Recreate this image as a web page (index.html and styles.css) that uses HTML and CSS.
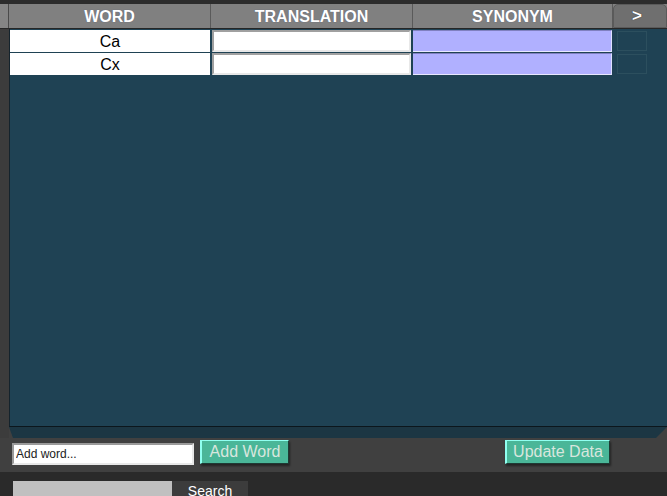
FILE: index.html
```html
<!DOCTYPE html>
<html>
<head>
<meta charset="utf-8">
<link rel="stylesheet" href="styles.css">
</head>
<body>
<div class="app">
  <div class="topstrip"></div>
  <div class="header">
    <div class="hgutter"></div>
    <div class="hcell w-word">WORD</div>
    <div class="hcell w-trans">TRANSLATION</div>
    <div class="hcell w-syn">SYNONYM</div>
    <div class="hnext">&gt;</div>
  </div>
  <div class="body">
    <div class="gutter"></div>
    <div class="tablewrap">
      <div class="table">
        <div class="row">
          <div class="cell-word">Ca</div>
          <div class="cell-trans"><input class="tinput" type="text"></div>
          <div class="cell-syn"></div>
          <div class="cell-box"></div>
        </div>
        <div class="row">
          <div class="cell-word">Cx</div>
          <div class="cell-trans"><input class="tinput" type="text"></div>
          <div class="cell-syn"></div>
          <div class="cell-box"></div>
        </div>
      </div>
      <div class="bevel"></div>
    </div>
  </div>
  <div class="controls">
    <input class="addinput" type="text" placeholder="Add word...">
    <button class="btn btn-add">Add Word</button>
    <button class="btn btn-update">Update Data</button>
  </div>
  <div class="searchbar">
    <div class="searchbox"></div>
    <div class="searchbtn">Search</div>
  </div>
</div>
</body>
</html>
```
FILE: styles.css
```css
* { box-sizing: border-box; }
html, body {
  margin: 0;
  padding: 0;
  background: #404040;
  font-family: "Liberation Sans", Arial, sans-serif;
  overflow: hidden;
}
.app {
  width: 667px;
  height: 496px;
  display: flex;
  flex-direction: column;
}
.app > * { flex-shrink: 0; }
.topstrip {
  height: 4px;
  background: #2c2c2c;
}
.header {
  height: 25px;
  display: flex;
  background: #808080;
  border-bottom: 1px solid #262626;
}
.hgutter {
  width: 9px;
  background: #858585;
  border-right: 1px solid #4a4a4a;
}
.hcell {
  color: #fff;
  font-weight: bold;
  font-size: 16px;
  line-height: 25px;
  text-align: center;
  border-right: 1px solid #5a5a5a;
  text-shadow: 0 0 1px rgba(40, 60, 120, 0.5);
}
.w-word { width: 202px; }
.w-trans { width: 202px; }
.w-syn { width: 200px; }
.hnext {
  flex: 1;
  background: #6f6f6f;
  color: #fff;
  font-weight: bold;
  font-size: 17px;
  line-height: 22px;
  text-align: center;
  border: 1px solid #5a5a5a;
  border-radius: 5px 5px 0 0;
  padding-right: 6px;
  text-shadow: 0 0 1px #222;
}
.body {
  display: flex;
  height: 409px;
}
.gutter {
  width: 9px;
  background: #3c3c3c;
}
.tablewrap {
  flex: 1;
  display: flex;
  flex-direction: column;
}
.table {
  flex: 1;
  background: #1f4254;
  border-left: 1px solid #14232c;
  border-bottom: 1px solid #0c161c;
  padding-top: 1px;
  display: flex;
  flex-direction: column;
  gap: 1px;
}
.row {
  display: flex;
  height: 22px;
}
.cell-word {
  width: 200px;
  background: #fff;
  color: #000;
  font-size: 16px;
  line-height: 23px;
  text-align: center;
}
.cell-trans {
  width: 202px;
  padding-left: 2px;
}
.tinput {
  display: block;
  width: 199px;
  height: 22px;
  margin: 0;
  border: 2px solid;
  border-color: #a0a0a0 #e8e8e8 #e8e8e8 #a0a0a0;
  background: #fff;
  padding: 0;
}
.cell-syn {
  width: 199px;
  margin-left: 1px;
  background: #b0b0ff;
  border-right: 1px solid #e0e0ff;
  border-bottom: 1px solid #e8e8ff;
  border-top: 1px solid #8080c0;
}
.cell-box {
  width: 30px;
  height: 20px;
  margin: 1px 0 0 5px;
  border: 1px solid #2c4f5e;
}
.bevel {
  height: 11px;
  background: #1c3643;
  clip-path: polygon(0 0, 100% 0, calc(100% - 11px) 100%, 4px 100%);
}
.controls {
  height: 34px;
  display: flex;
  align-items: flex-start;
  padding-top: 2px;
}
.addinput {
  margin: 3px 0 0 12px;
  width: 182px;
  height: 22px;
  border: 2px solid;
  border-color: #9a9a9a #e8e8e8 #e8e8e8 #9a9a9a;
  background: #fff;
  font-family: "Liberation Sans", Arial, sans-serif;
  font-size: 12px;
  padding: 0 2px;
}
.addinput::placeholder { color: #222; }
.btn {
  height: 24px;
  background: #4ab698;
  color: #d8e6de;
  font-family: "Liberation Sans", Arial, sans-serif;
  font-size: 16px;
  line-height: 20px;
  padding: 0 6px;
  border: 1px solid;
  border-color: #90fff0 #1e3a34 #1e3a34 #90fff0;
  border-left-width: 2px;
  box-shadow: 1px 2px 2px rgba(0, 0, 0, 0.45);
}
.btn-add {
  margin-left: 6px;
  width: 89px;
}
.btn-update {
  margin-left: 216px;
  width: 105px;
}
.searchbar {
  height: 24px;
  overflow: hidden;
  background: #2a2a2a;
  display: flex;
  align-items: flex-start;
  padding: 9px 0 0 13px;
}
.searchbox {
  width: 159px;
  height: 20px;
  background: #c0c0c0;
}
.searchbtn {
  width: 76px;
  height: 20px;
  background: #3c3c3c;
  color: #fff;
  font-size: 14px;
  line-height: 16px;
  padding-top: 2px;
  text-align: center;
}
```
